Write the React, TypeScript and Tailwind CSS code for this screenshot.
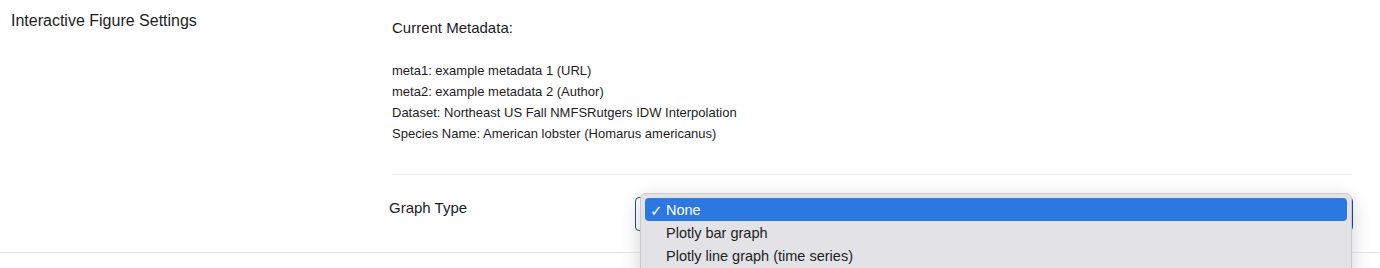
export default function App() {
  const options = ["None", "Plotly bar graph", "Plotly line graph (time series)"]
  return (
    <div className="h-[268px] overflow-hidden bg-white text-[#1d1d1f] font-['Liberation_Sans',Arial,sans-serif]">
      <div className="flex border-b border-[#e6e6e6]">
        <div className="w-[392px] shrink-0 pl-[11px] pt-[10px] text-[16px] leading-[22px]">
          Interactive Figure Settings
        </div>
        <div className="flex-1 pr-[28px]">
          <div className="pt-[18px] text-[15px] leading-[20px]">Current Metadata:</div>
          <div className="mt-[22px] text-[13px] leading-[21px]">
            <div>meta1: example metadata 1 (URL)</div>
            <div>meta2: example metadata 2 (Author)</div>
            <div>Dataset: Northeast US Fall NMFSRutgers IDW Interpolation</div>
            <div>Species Name: American lobster (Homarus americanus)</div>
          </div>
          <div className="mt-[30px] border-t border-[#ececec]" />
          <div className="relative flex h-[77px] -ml-[3px]">
            <div className="w-[246px] shrink-0 pt-[23px] text-[15px] leading-[20px]">Graph Type</div>
            <div className="mt-[22px] h-[34px] flex-1 -mr-[1px] rounded-[4px] border border-[#1c4f9e] bg-white" />
            <div className="absolute left-[251px] top-[18px] right-0 h-[90px] rounded-[6px] border border-[#c9c9cc] bg-[#e3e2e7] p-[4px] shadow-[0_6px_20px_rgba(0,0,0,0.18)]">
              {options.map((o, i) => (
                <div
                  key={o}
                  className={
                    i === 0
                      ? "flex h-[23px] items-center rounded-[4px] bg-[#2c78e0] pl-[5px] pt-[3px] text-[14.5px] text-white"
                      : "flex h-[23px] items-center pl-[5px] pt-[3px] text-[14.5px] text-[#222]"
                  }
                >
                  <span className="w-[16px] text-[15px] font-bold font-['DejaVu_Sans',sans-serif]">{i === 0 ? "✓" : ""}</span>
                  <span>{o}</span>
                </div>
              ))}
            </div>
          </div>
        </div>
      </div>
    </div>
  )
}
